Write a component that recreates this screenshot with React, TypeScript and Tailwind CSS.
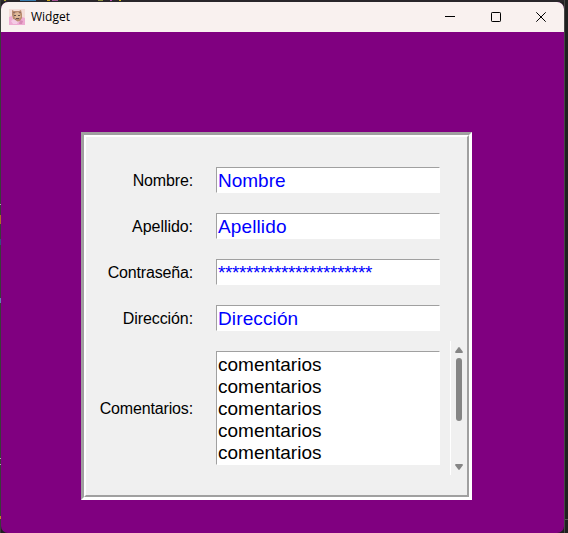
import React from 'react';

const fields = [
  { label: 'Nombre:', value: 'Nombre', labelStyle: 'tracking-[-0.15px]', valueStyle: '' },
  { label: 'Apellido:', value: 'Apellido', labelStyle: 'tracking-[-0.05px]', valueStyle: 'tracking-[0.12px]' },
  { label: 'Contraseña:', value: '*'.repeat(22), labelStyle: 'tracking-[-0.17px]', valueStyle: 'tracking-[-0.39px]' },
  { label: 'Dirección:', value: 'Dirección', labelStyle: 'tracking-[-0.1px]', valueStyle: 'tracking-[0.12px]' },
];

const sunken = 'border border-t-[#a0a0a0] border-l-[#a0a0a0] border-r-white border-b-white bg-white';

function Avatar() {
  return (
    <svg width="16" height="16" viewBox="0 0 16 16" className="shrink-0">
      <rect width="16" height="16" fill="#f3dcd8" />
      <path d="M0 8l3-1 1 5 6 1 3-5 3 1v7H0z" fill="#eeabd2" />
      <path d="M3 1l2 1h5l2-1 1 4v4l-2 3-4 1-3-3-1-4z" fill="#b98c70" />
      <path d="M6 4l3-1 2 2 1 3-3 2-3-1-1-3z" fill="#dcb797" />
      <path d="M5 6h2v1H5zM9 6h2v1H9zM7 9h3v1H7z" fill="#65504c" />
      <path d="M4 3h2v1H4zM10 3h2v1h-2zM5 10h2v1H5z" fill="#937067" />
      <path d="M2 12l3-2 4 3-1 2H4z" fill="#f4cce5" />
      <path d="M11 11l3 1-1 3h-3z" fill="#d78ab5" />
    </svg>
  );
}

function TitleBar() {
  return (
    <header className="flex h-[30px] shrink-0 items-center bg-[#f9f1ef] pl-2">
      <Avatar />
      <h1 className="ml-[6px] flex-1 font-['Open_Sans','Noto_Sans',sans-serif] text-[12px] leading-[16px] text-black">Widget</h1>
      <button aria-label="Minimizar" className="flex h-full w-[46px] items-center justify-center">
        <svg width="10" height="10" viewBox="0 0 10 10"><path d="M0 4.5h10" stroke="#000" /></svg>
      </button>
      <button aria-label="Maximizar" className="flex h-full w-[45px] items-center justify-center">
        <svg width="10" height="10" viewBox="0 0 10 10"><rect x=".5" y=".5" width="9" height="9" rx=".7" fill="none" stroke="#000" /></svg>
      </button>
      <button aria-label="Cerrar" className="flex h-full w-[46px] items-center justify-center">
        <svg width="10" height="10" viewBox="0 0 10 10"><path d="M.3.3l9.4 9.4M9.7.3L.3 9.7" stroke="#000" /></svg>
      </button>
    </header>
  );
}

function ScrollBar() {
  return (
    <div className="ml-[10px] flex h-[134px] w-[17px] flex-col items-center border-l border-white pt-[6px] pb-[5px]">
      <svg width="8" height="6" viewBox="0 0 8 6"><path d="M3.3.5Q4-.4 4.7.5L7.7 4.6Q8.3 6 7 6H1Q-.3 6 .3 4.6z" fill="#858585" /></svg>
      <div className="mt-[5px] h-[63px] w-[6px] rounded-full bg-[#858585]" />
      <div className="flex-1" />
      <svg width="8" height="6" viewBox="0 0 8 6"><path d="M3.3 5.5Q4 6.4 4.7 5.5L7.7 1.4Q8.3 0 7 0H1Q-.3 0 .3 1.4z" fill="#858585" /></svg>
    </div>
  );
}

export default function App() {
  return (
    <main className="flex h-[533px] w-[568px] overflow-hidden bg-[#202020] font-['Liberation_Sans',Arial,sans-serif]">
      <div className="flex w-px shrink-0 flex-col bg-[#3b3b3b]">
        <div className="mt-[204px] h-px bg-[#aaa]" />
        <div className="mt-[10px] h-[9px] bg-[#b46a26]" />
        <div className="mt-[15px] h-[6px] bg-[#364b80]" />
        <div className="mt-[53px] h-[5px] bg-[#6382b4]" />
        <div className="mt-[155px] h-px bg-[#aaa]" />
        <div className="mt-[5px] h-px bg-[#aaa]" />
        <div className="mt-[51px] h-[3px] bg-[#c68526]" />
      </div>
      <div className="flex w-[563px] shrink-0 flex-col">
        <div className="flex h-[2px] shrink-0 bg-[#29262a]">
          <div className="ml-[3px] h-px w-[2px] bg-[#a8a22c]" />
          <div className="ml-[14px] h-px w-[16px] bg-[#397dae]" />
          <div className="ml-[11px] h-px w-[3px] bg-[#c9a61f]" />
          <div className="ml-[2px] h-px w-[6px] bg-[#a34f91]" />
          <div className="ml-[40px] h-px w-[5px] bg-[#898b40]" />
          <div className="ml-[7px] h-px w-[2px] bg-[#b54cab]" />
          <div className="ml-[7px] h-px w-[2px] bg-[#d0b520]" />
        </div>
        <div className="flex flex-1 flex-col overflow-hidden rounded-[7px] bg-[#800080]">
          <TitleBar />
          <div className="ml-[80px] mt-[100px] h-[368px] w-[391px] shrink-0 border-[3px] border-t-[#a0a0a0] border-l-[#a0a0a0] border-r-white border-b-white">
            <form className="flex h-full flex-col gap-5 border-2 border-t-white border-l-white border-r-[#a0a0a0] border-b-[#a0a0a0] bg-[#f0f0f0] pt-[30px]">
              {fields.map((field) => (
                <div key={field.label} className="flex h-[26px] shrink-0 items-center">
                  <label className={`w-[107px] pt-[2px] text-right text-[16px] leading-[20px] text-black ${field.labelStyle}`}>{field.label}</label>
                  <div className={`ml-[23px] h-[26px] w-[224px] pl-px text-[19px] leading-[26px] text-[#0000ff] ${sunken} ${field.valueStyle}`}>{field.value}</div>
                </div>
              ))}
              <div className="-mt-[10px] flex h-[134px] shrink-0 items-center">
                <label className="w-[107px] pt-[2px] text-right text-[16px] leading-[20px] tracking-[-0.15px] text-black">Comentarios:</label>
                <div className={`ml-[23px] h-[114px] w-[224px] overflow-hidden pl-px pt-[2px] text-[19px] leading-[22px] text-black ${sunken}`}>
                  {Array.from({ length: 5 }, (_, i) => <div key={i}>comentarios</div>)}
                </div>
                <ScrollBar />
              </div>
            </form>
          </div>
        </div>
      </div>
      <div className="flex w-1 flex-col border-l border-[#464646]">
        <div className="mt-[519px] h-px bg-[#555]" />
      </div>
    </main>
  );
}
